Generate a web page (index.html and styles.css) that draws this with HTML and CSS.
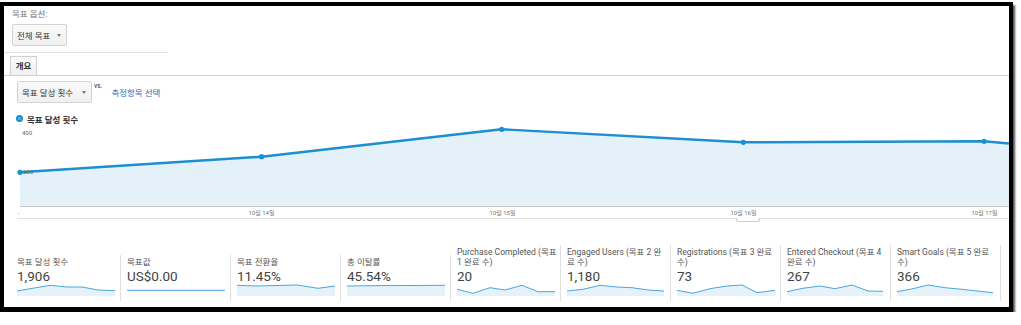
FILE: index.html
```html
<!DOCTYPE html>
<html lang="ko">
<head>
<meta charset="utf-8">
<title>목표 개요</title>
<link rel="stylesheet" href="styles.css">
</head>
<body>
<div class="frame">
  <div class="goal-opt">
    <div class="opt-label">목표 옵션:</div>
    <div class="btn btn-goal"><span>전체 목표</span><span class="caret"></span></div>
  </div>
  <div class="tabs"><div class="tab">개요</div></div>
  <div class="metric-pick">
    <div class="btn btn-metric"><span>목표 달성 횟수</span><span class="caret"></span></div>
    <span class="vs">vs.</span>
    <a class="pick-link">측정항목 선택</a>
  </div>
  <div class="legend"><span class="dot"></span><span>목표 달성 횟수</span></div>
  <div class="chart">
    <svg class="chart-svg" width="989" height="82" viewBox="0 0 989 82">
      <polygon fill="#e5f1f8" points="0,48.3 241.6,32.7 481.7,5.3 723.3,18.3 964,17.3 989,19.5 989,82 0,82"/>
      <polyline fill="none" stroke="#1b8fd0" stroke-width="2.4" stroke-linejoin="round" points="0,48.3 241.6,32.7 481.7,5.3 723.3,18.3 964,17.3 989,19.5"/>
      <circle cx="0" cy="48.3" r="2.6" fill="#1b8fd0"/>
      <circle cx="241.6" cy="32.7" r="2.6" fill="#1b8fd0"/>
      <circle cx="481.7" cy="5.3" r="2.6" fill="#1b8fd0"/>
      <circle cx="723.3" cy="18.3" r="2.6" fill="#1b8fd0"/>
      <circle cx="964" cy="17.3" r="2.6" fill="#1b8fd0"/>
    </svg>
    <span class="ylab y400">400</span>
    <span class="ylab y200">200</span>
  </div>
  <div class="xaxis">
    <span class="xl-first">···</span>
    <span class="xl">10월 14일</span>
    <span class="xl">10월 15일</span>
    <span class="xl">10월 16일</span>
    <span class="xl">10월 17일</span>
    <span class="handle"></span>
  </div>
  <div class="metrics">
    <div class="metric">
      <div class="m-label">목표 달성 횟수</div>
      <div class="m-value">1,906</div>
      <svg class="spark" viewBox="0 0 98 12" preserveAspectRatio="none"><polygon class="sf" points="0,7 33,1.3 50,3 65,3 81,6 98,6.7 98,12 0,12"/><polyline class="sl" points="0,7 33,1.3 50,3 65,3 81,6 98,6.7"/></svg>
    </div>
    <div class="metric">
      <div class="m-label">목표값</div>
      <div class="m-value">US$0.00</div>
      <svg class="spark" viewBox="0 0 98 12" preserveAspectRatio="none"><polyline class="sl" points="0,6.3 98,6.3"/></svg>
    </div>
    <div class="metric">
      <div class="m-label">목표 전환율</div>
      <div class="m-value">11.45%</div>
      <svg class="spark" viewBox="0 0 98 12" preserveAspectRatio="none"><polygon class="sf" points="0,1.3 20,2 40,1.5 60,1 81,4.3 98,2 98,12 0,12"/><polyline class="sl" points="0,1.3 20,2 40,1.5 60,1 81,4.3 98,2"/></svg>
    </div>
    <div class="metric">
      <div class="m-label">총 이탈률</div>
      <div class="m-value">45.54%</div>
      <svg class="spark" viewBox="0 0 98 12" preserveAspectRatio="none"><polygon class="sf" points="0,2 33,1.6 65,1.5 98,1.3 98,12 0,12"/><polyline class="sl" points="0,2 33,1.6 65,1.5 98,1.3"/></svg>
    </div>
    <div class="metric">
      <div class="m-label">Purchase Completed (목표 1 완료 수)</div>
      <div class="m-value">20</div>
      <svg class="spark" viewBox="0 0 98 12" preserveAspectRatio="none"><polygon class="sf" points="0,5.3 16,9.3 33,3.7 48,6 65,1.3 81,7.7 98,7.7 98,12 0,12"/><polyline class="sl" points="0,5.3 16,9.3 33,3.7 48,6 65,1.3 81,7.7 98,7.7"/></svg>
    </div>
    <div class="metric">
      <div class="m-label">Engaged Users (목표 2 완<br>료 수)</div>
      <div class="m-value">1,180</div>
      <svg class="spark" viewBox="0 0 98 12" preserveAspectRatio="none"><polygon class="sf" points="0,7 16,5.3 33,1.3 50,3 65,3.7 81,6 97,7 97,12 0,12"/><polyline class="sl" points="0,7 16,5.3 33,1.3 50,3 65,3.7 81,6 97,7"/></svg>
    </div>
    <div class="metric">
      <div class="m-label">Registrations (목표 3 완료 수)</div>
      <div class="m-value">73</div>
      <svg class="spark" viewBox="0 0 98 12" preserveAspectRatio="none"><polygon class="sf" points="0,6.3 16,9.3 33,4.7 50,2 65,1 80,8.7 98,6.3 98,12 0,12"/><polyline class="sl" points="0,6.3 16,9.3 33,4.7 50,2 65,1 80,8.7 98,6.3"/></svg>
    </div>
    <div class="metric">
      <div class="m-label">Entered Checkout (목표 4 완료 수)</div>
      <div class="m-value">267</div>
      <svg class="spark" viewBox="0 0 98 12" preserveAspectRatio="none"><polygon class="sf" points="0,7.7 16,4.3 33,2 48,4.7 65,1 81,7 96,7.3 96,12 0,12"/><polyline class="sl" points="0,7.7 16,4.3 33,2 48,4.7 65,1 81,7 96,7.3"/></svg>
    </div>
    <div class="metric">
      <div class="m-label">Smart Goals (목표 5 완료 수)</div>
      <div class="m-value">366</div>
      <svg class="spark" viewBox="0 0 98 12" preserveAspectRatio="none"><polygon class="sf" points="0,7.7 16,4.7 31,1 48,3.7 65,5.3 80,7 96,8.7 96,12 0,12"/><polyline class="sl" points="0,7.7 16,4.7 31,1 48,3.7 65,5.3 80,7 96,8.7"/></svg>
    </div>
  </div>
</div>
</body>
</html>
```

FILE: styles.css
```css
* { box-sizing: border-box; }

body {
  margin: 0;
  background: #fff;
  font-family: "Roboto", "Noto Sans CJK KR", sans-serif;
  color: #333;
}

.frame {
  margin-top: 2px;
  width: 1013px;
  height: 310px;
  border: 4px solid #000;
  border-bottom-width: 5px;
  box-shadow: 2px 3px 2px rgba(0, 0, 0, 0.7);
  overflow: hidden;
  background: #fff;
}

/* goal options */
.goal-opt {
  width: 164px;
  padding: 3px 0 6px 8px;
  border-bottom: 1px solid #e2e2e2;
}

.opt-label {
  height: 11px;
  font-size: 8.5px;
  line-height: 11px;
  color: #777;
}

.btn {
  display: flex;
  align-items: center;
  justify-content: space-between;
  height: 22px;
  padding: 0 5px 0 4px;
  border: 1px solid #d3d3d3;
  border-radius: 2px;
  background: linear-gradient(#fafafa, #f0f0f0);
  font-size: 8.5px;
  color: #333;
}

.btn-goal { width: 55px; margin-top: 4px; }
.btn-metric { width: 75px; }

.caret {
  width: 0;
  height: 0;
  border-left: 2.5px solid transparent;
  border-right: 2.5px solid transparent;
  border-top: 3px solid #777;
}

/* tabs */
.tabs {
  margin-top: 3px;
  height: 20px;
  padding-left: 6px;
  border-bottom: 1px solid #d0d0d0;
}

.tab {
  width: 27px;
  height: 19px;
  border: 1px solid #d0d0d0;
  border-bottom: none;
  background: linear-gradient(#fafafa, #f1f1f1);
  font-size: 8.5px;
  font-weight: 700;
  line-height: 19px;
  text-align: center;
  color: #333;
}

/* metric picker */
.metric-pick {
  display: flex;
  align-items: center;
  height: 22px;
  margin-top: 5px;
  padding-left: 13px;
}

.vs {
  align-self: flex-start;
  margin: 1px 0 0 2px;
  font-size: 6.5px;
  font-weight: 500;
  line-height: 8px;
  color: #555;
}

.pick-link {
  margin-left: 9px;
  font-size: 8.5px;
  color: #2d6db5;
}

/* legend */
.legend {
  display: flex;
  align-items: center;
  gap: 4px;
  height: 11px;
  margin-top: 10px;
  padding-left: 12px;
  font-size: 8.5px;
  font-weight: 700;
  color: #333;
}

.dot {
  width: 7px;
  height: 7px;
  border-radius: 50%;
  background: #1b8fd0;
  border: 2px solid #1b8fd0;
  box-shadow: inset 0 0 0 1px #7cc3ea;
}

/* chart */
.chart {
  position: relative;
  height: 83px;
  margin-left: 16px;
  border-bottom: 1px solid #c8c8c8;
}

.chart-svg {
  display: block;
  overflow: visible;
}

.ylab {
  position: absolute;
  font-size: 6px;
  line-height: 8px;
  color: #666;
}

.y400 { left: 2px; top: 5px; }
.y200 { left: 3px; top: 44px; }

.xaxis {
  position: relative;
  display: grid;
  grid-template-columns: 121px repeat(4, 241px);
  height: 12px;
  margin-left: 13px;
  padding-left: 3px;
  border-bottom: 1px solid #e0e0e0;
  font-size: 6px;
  line-height: 11px;
  color: #777;
}

.xl { text-align: center; }
.xl-first { margin-left: -3px; letter-spacing: -1px; color: #999; }

.handle {
  position: absolute;
  left: 719px;
  top: 11px;
  width: 24px;
  height: 4px;
  border: 1px solid #ccc;
  border-top: none;
  border-radius: 0 0 3px 3px;
  background: #fff;
}

/* metrics row */
.metrics {
  display: flex;
  align-items: flex-end;
  margin-top: 26px;
  padding-left: 7px;
}

.metric {
  width: 110px;
  flex: none;
  padding: 2px 5px 5px 6px;
  border-right: 1px solid #e0e0e0;
}

.m-label {
  width: 103px;
  font-size: 8.5px;
  line-height: 10px;
  color: #555;
}

.m-value {
  height: 17px;
  padding-top: 2px;
  font-size: 13.5px;
  line-height: 15px;
  color: #444;
}

.spark {
  display: block;
  width: 98px;
  height: 12px;
  overflow: visible;
}

.sf { fill: #e6f2f9; }
.sl { fill: none; stroke: #4aa7dc; stroke-width: 1; stroke-linejoin: round; }
```
